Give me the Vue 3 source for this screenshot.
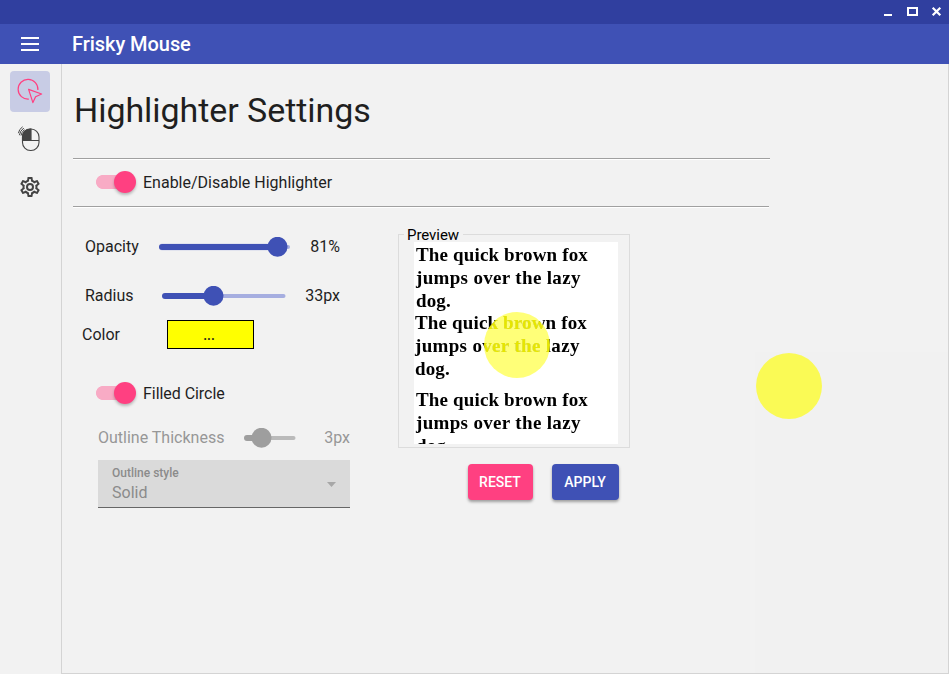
<script setup>
import { ref } from 'vue'

const enabled = ref(true)
const filled = ref(true)
const samples = ['first', 'second', 'third']
</script>

<template>
  <div class="window">
    <header class="titlebar">
      <svg class="controls" width="66" height="24" viewBox="0 0 66 24" shape-rendering="crispEdges">
        <rect x="1" y="14" width="8" height="2" fill="#fff" />
        <path fill="#fff" fill-rule="evenodd" d="M24 7h11v9H24zM26 9v5h7V9z" />
        <path shape-rendering="auto" d="M49.7 7.7l7.6 7.6M57.3 7.7l-7.6 7.6" stroke="#fff" stroke-width="2.2" fill="none" />
      </svg>
    </header>
    <header class="appbar">
      <svg class="burger" width="18" height="14" viewBox="0 0 18 14" shape-rendering="crispEdges">
        <path fill="#fff" d="M0 0h18v2H0zM0 6h18v2H0zM0 12h18v2H0z" />
      </svg>
      <span class="app-name">Frisky Mouse</span>
    </header>
    <div class="body">
      <nav class="rail">
        <button class="nav active">
          <svg width="40" height="41" viewBox="0 0 40 41" fill="none" stroke="#ff4081" stroke-width="1.2">
            <path d="M18.8 28.1A9.9 9.9 0 1 1 27.9 19" />
            <path d="M18.6 18.4L31.6 23L25.6 25.7L22.9 31.6Z" stroke-linejoin="round" />
          </svg>
        </button>
        <button class="nav">
          <svg width="40" height="41" viewBox="0 0 40 41" fill="none" stroke="#444" stroke-width="1.1">
            <path d="M20.8 10h-.8a7.5 7.5 0 0 0-7.5 7.5v4h8.3z" fill="#444" />
            <rect x="12.5" y="10" width="16.5" height="21.5" rx="8" />
            <path d="M12.5 21.5H29M20.8 10V21.5" />
            <path d="M8.4 14.2Q9 10.2 12.6 7.8M9.4 16.2Q10 11.8 13.8 9M11 16.6Q11.4 13.4 14.4 10.6" stroke-width="1" />
          </svg>
        </button>
        <button class="nav gear">
          <svg width="24" height="24" viewBox="0 0 24 24" fill="#444">
            <path d="M12,8A4,4 0 0,1 16,12A4,4 0 0,1 12,16A4,4 0 0,1 8,12A4,4 0 0,1 12,8M12,10A2,2 0 0,0 10,12A2,2 0 0,0 12,14A2,2 0 0,0 14,12A2,2 0 0,0 12,10M10,22C9.75,22 9.54,21.82 9.5,21.58L9.13,18.93C8.5,18.68 7.96,18.34 7.44,17.94L4.95,18.95C4.73,19.03 4.46,18.95 4.34,18.73L2.34,15.27C2.21,15.05 2.27,14.78 2.46,14.63L4.57,12.97L4.5,12L4.57,11L2.46,9.37C2.27,9.22 2.21,8.95 2.34,8.73L4.34,5.27C4.46,5.05 4.73,4.96 4.95,5.05L7.44,6.05C7.96,5.66 8.5,5.32 9.13,5.07L9.5,2.42C9.54,2.18 9.75,2 10,2H14C14.25,2 14.46,2.18 14.5,2.42L14.87,5.07C15.5,5.32 16.04,5.66 16.56,6.05L19.05,5.05C19.27,4.96 19.54,5.05 19.66,5.27L21.66,8.73C21.79,8.95 21.73,9.22 21.54,9.37L19.43,11L19.5,12L19.43,13L21.54,14.63C21.73,14.78 21.79,15.05 21.66,15.27L19.66,18.73C19.54,18.95 19.27,19.04 19.05,18.95L16.56,17.95C16.04,18.34 15.5,18.68 14.87,18.93L14.5,21.58C14.46,21.82 14.25,22 14,22H10M11.25,4L10.88,6.61C9.68,6.86 8.62,7.5 7.85,8.39L5.44,7.35L4.69,8.65L6.8,10.2C6.4,11.37 6.4,12.64 6.8,13.8L4.68,15.36L5.43,16.66L7.86,15.62C8.63,16.5 9.68,17.14 10.87,17.38L11.24,20H12.76L13.13,17.39C14.32,17.14 15.37,16.5 16.14,15.62L18.57,16.66L19.32,15.36L17.2,13.81C17.6,12.64 17.6,11.37 17.2,10.2L19.31,8.65L18.56,7.35L16.15,8.39C15.38,7.5 14.32,6.86 13.12,6.62L12.75,4H11.25Z" />
          </svg>
        </button>
      </nav>
      <main class="content">
        <h1>Highlighter Settings</h1>
        <div class="rule"></div>
        <label class="toggle enable" @click="enabled = !enabled">
          <span class="switch" :class="{ on: enabled }"><i></i></span>
          <span class="enable-text">Enable/Disable Highlighter</span>
        </label>
        <div class="rule short"></div>

        <div class="columns">
          <section class="settings">
            <div class="row opacity">
              <span class="name">Opacity</span>
              <svg width="132" height="20" viewBox="0 0 132 20">
                <rect x="0" y="6.4" width="125" height="7.2" rx="3.6" fill="#a6aee0" opacity=".45" />
                <rect x="100" y="8" width="31" height="4" rx="2" fill="#a6aee0" />
                <rect x="0" y="7" width="119" height="6" rx="3" fill="#3f51b5" />
                <circle cx="118.5" cy="9.8" r="10" fill="#3f51b5" />
              </svg>
              <span class="value">81%</span>
            </div>
            <div class="row radius">
              <span class="name">Radius</span>
              <svg width="124" height="20" viewBox="0 0 124 20">
                <rect x="40" y="8" width="83.5" height="4" rx="2" fill="#a6aee0" />
                <rect x="0" y="7" width="52" height="6" rx="3" fill="#3f51b5" />
                <circle cx="51.5" cy="9.8" r="10" fill="#3f51b5" />
              </svg>
              <span class="value">33px</span>
            </div>
            <div class="row color">
              <span class="name">Color</span>
              <button class="swatch">...</button>
            </div>
            <label class="toggle fill" @click="filled = !filled">
              <span class="switch" :class="{ on: filled }"><i></i></span>
              <span class="fill-text">Filled Circle</span>
            </label>
            <div class="row thickness">
              <span class="name">Outline Thickness</span>
              <svg width="52" height="20" viewBox="0 0 52 20">
                <rect x="10" y="8" width="41.5" height="4" rx="2" fill="#bababa" />
                <rect x="0" y="7" width="20" height="6" rx="3" fill="#9e9e9e" />
                <circle cx="17.5" cy="9.8" r="10" fill="#9e9e9e" />
              </svg>
              <span class="value">3px</span>
            </div>
            <div class="select">
              <div class="select-text">
                <span class="caption">Outline style</span>
                <span class="choice">Solid</span>
              </div>
              <svg width="9" height="7" viewBox="0 0 9 7"><path d="M0 2h9L4.5 7z" fill="#a7a7a7" /></svg>
            </div>
          </section>

          <section class="side">
            <div class="group">
              <span class="legend">Preview</span>
              <div class="page">
                <p v-for="s in samples" :key="s" :class="s">
                  The quick brown fox <span class="wide">jumps over the lazy</span> dog.
                </p>
                <span class="spot lift"></span>
                <span class="spot tint"></span>
              </div>
            </div>
            <div class="actions">
              <button class="btn reset">RESET</button>
              <button class="btn apply">APPLY</button>
            </div>
          </section>
        </div>
      </main>
    </div>
    <div class="overlay"><span class="dot"></span></div>
  </div>
</template>

<style>
body {
  margin: 0;
  overflow: hidden;
}
</style>

<style scoped>
* {
  box-sizing: border-box;
}
.window {
  position: relative;
  width: 949px;
  height: 674px;
  display: flex;
  flex-direction: column;
  background: #f2f2f2;
  font-family: Roboto, sans-serif;
  font-size: 16px;
  line-height: 20px;
  color: #1f1f1f;
  overflow: hidden;
}
button {
  border: 0;
  padding: 0;
  font-family: inherit;
}
svg {
  display: block;
  flex: none;
}
.titlebar {
  height: 24px;
  flex: none;
  display: flex;
  justify-content: flex-end;
  background: #303f9f;
}
.appbar {
  height: 40px;
  flex: none;
  display: flex;
  align-items: center;
  gap: 33px;
  padding-left: 21px;
  background: #3f51b5;
}
.app-name {
  color: #fff;
  font-size: 20px;
  font-weight: 500;
  letter-spacing: -0.05px;
}
.body {
  flex: 1;
  display: flex;
  min-height: 0;
}
.rail {
  width: 62px;
  flex: none;
  display: flex;
  flex-direction: column;
  align-items: flex-start;
  gap: 7px;
  padding: 7px 0 0 10px;
  border-right: 1px solid #d4d4d4;
}
.nav {
  width: 40px;
  height: 41px;
  display: flex;
  align-items: center;
  justify-content: center;
  border-radius: 4px;
  background: none;
}
.nav.active {
  background: #c8cce5;
}
.nav.gear {
  height: 40px;
}
.content {
  flex: 1;
  padding-left: 11px;
  border-right: 1px solid #d4d4d4;
  border-bottom: 1px solid #d4d4d4;
}
h1 {
  height: 94px;
  margin: 0;
  padding-left: 1px;
  font-size: 34px;
  line-height: 93px;
  font-weight: 400;
  letter-spacing: -0.06px;
  white-space: nowrap;
}
.rule {
  width: 697px;
  height: 2px;
  border-top: 1px solid #a0a0a0;
  border-bottom: 1px solid #fff;
}
.rule.short {
  width: 696px;
}
.toggle {
  display: flex;
  align-items: center;
  padding-left: 23px;
}
.enable {
  height: 46px;
}
.enable-text,
.fill-text {
  padding-left: 7px;
}
.switch {
  width: 40px;
  height: 22px;
  flex: none;
  display: flex;
  align-items: center;
  justify-content: flex-end;
  margin-bottom: 3px;
  background:
    radial-gradient(circle at 7px 7px, #f8abc5 6.6px, transparent 7.4px) 0 4px / 7px 14px no-repeat,
    linear-gradient(#f8abc5, #f8abc5) 7px 4px / 22px 14px no-repeat;
}
.switch:not(.on) {
  justify-content: flex-start;
}
.switch i {
  width: 22px;
  height: 22px;
  border-radius: 50%;
  background: #ff4081;
  box-shadow: 0 2px 3px rgba(0, 0, 0, 0.25);
}
.columns {
  display: flex;
  gap: 48px;
  padding-top: 26px;
}
.settings {
  width: 277px;
  display: flex;
  flex-direction: column;
}
.row {
  display: flex;
  align-items: center;
}
.name {
  flex: none;
}
.value {
  flex: 1;
  text-align: right;
}
.opacity {
  height: 24px;
  margin-top: 1px;
  padding: 0 10px 0 12px;
}
.opacity .name {
  width: 74px;
}
.radius {
  height: 24px;
  margin-top: 25px;
  padding: 0 10px 0 12px;
}
.radius .name {
  width: 77px;
}
.color {
  height: 29px;
  margin-top: 12px;
  padding-left: 9px;
}
.color .name {
  width: 85px;
}
.swatch {
  width: 87px;
  height: 29px;
  border: 1px solid #000;
  padding-right: 3px;
  background: #ff0;
  color: #1f1f1f;
  font-size: 14px;
  font-weight: 500;
}
.fill {
  height: 24px;
  margin-top: 33px;
}
.fill-text {
  letter-spacing: -0.05px;
}
.thickness {
  height: 24px;
  margin-top: 20px;
  padding-left: 25px;
  color: #979797;
}
.thickness .name {
  width: 146px;
}
.select {
  height: 48px;
  margin: 10px 0 0 25px;
  padding: 0 14px;
  display: flex;
  align-items: center;
  justify-content: space-between;
  background: #dadada;
  border-bottom: 1px solid #666;
  color: #8b8b8b;
}
.select-text {
  display: flex;
  flex-direction: column;
}
.caption {
  height: 19px;
  font-size: 12px;
  font-weight: 500;
  line-height: 16px;
  padding-top: 1px;
}
.side {
  width: 232px;
}
.group {
  height: 214px;
  border: 1px solid #dcdcdc;
  padding: 0 0 0 15px;
}
.legend {
  display: block;
  width: 59px;
  height: 16px;
  margin: -9px 0 0 -10px;
  padding-left: 3px;
  font-size: 15px;
  line-height: 18px;
  letter-spacing: -0.05px;
  color: #000;
  background: #f2f2f2;
}
.page {
  position: relative;
  isolation: isolate;
  width: 204px;
  height: 202px;
  padding: 1px 0 0 2px;
  overflow: hidden;
  background: #fff;
  color: #000;
  font: bold 19px/23px 'Liberation Serif', serif;
  letter-spacing: 0.15px;
}
.page p {
  width: 190px;
  margin: 0;
}
.page .wide {
  letter-spacing: 0.33px;
}
.page .second {
  margin: -1px 0 0 -1px;
}
.page .third {
  margin-top: 8px;
}
.spot {
  position: absolute;
  left: 70px;
  top: 70px;
  width: 66px;
  height: 66px;
  border-radius: 50%;
}
.lift {
  background: #e6e600;
  mix-blend-mode: lighten;
}
.tint {
  background: #ffff78;
  mix-blend-mode: multiply;
}
.actions {
  display: flex;
  justify-content: flex-end;
  gap: 19px;
  padding: 16px 11px 0 0;
}
.btn {
  width: 65px;
  height: 36px;
  border-radius: 4px;
  padding-right: 1px;
  color: #fff;
  font-size: 14px;
  font-weight: 500;
  box-shadow: 0 2px 3px rgba(0, 0, 0, 0.35);
}
.reset {
  background: #ff4081;
}
.apply {
  width: 67px;
  background: #3f51b5;
}
.overlay {
  position: absolute;
  left: 755px;
  top: 352px;
  width: 193px;
  height: 321px;
  background: #f1f1f1;
}
.dot {
  display: block;
  width: 66px;
  height: 66px;
  margin: 0.5px 0 0 0.5px;
  border-radius: 50%;
  background: #fafa55;
}
</style>
